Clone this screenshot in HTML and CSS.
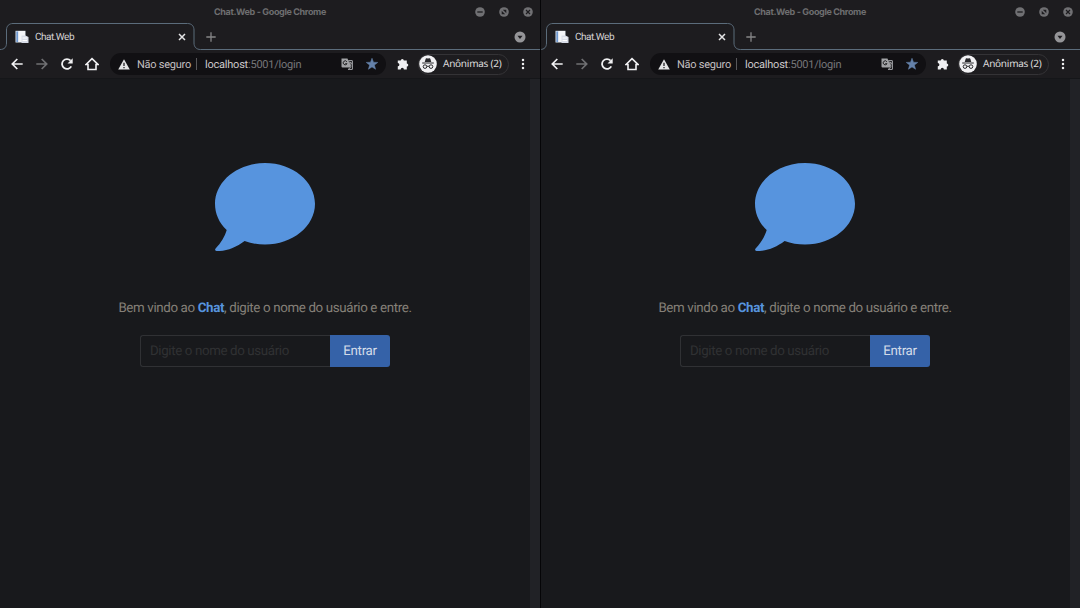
FILE: index.html
```html
<!DOCTYPE html>
<html lang="pt-BR">
<head>
<meta charset="utf-8">
<title>Chat.Web</title>
<link rel="stylesheet" href="styles.css">
</head>
<body>
<svg class="symbols" width="0" height="0" aria-hidden="true">
  <symbol id="win-min" viewBox="0 0 10 10"><circle cx="5" cy="5" r="4.800" fill="#707073"/><path d="M2.300 5h5.400" stroke="#1d1c1f" stroke-width="1.300"/></symbol>
  <symbol id="win-max" viewBox="0 0 10 10"><circle cx="5" cy="5" r="4.800" fill="#707073"/><path d="M3.800 2.700h3.500v3.500zM2.700 3.800v3.500h3.500z" fill="#1d1c1f"/></symbol>
  <symbol id="win-close" viewBox="0 0 10 10"><circle cx="5" cy="5" r="4.800" fill="#707073"/><path d="M3 3l4 4M7 3l-4 4" stroke="#1d1c1f" stroke-width="1.200"/></symbol>
  <symbol id="tab-line" viewBox="0 0 540 27"><path d="M0 26.500C4.500 26.500 6.500 24 6.500 20V7C6.500 3 9 .5 13 .5H187.500C191.500 .5 194 3 194 7V20C194 24 196.500 26.500 200.500 26.500H540" fill="none" stroke="#5b6c7b"/></symbol>
  <symbol id="favicon" viewBox="0 0 14 14"><path d="M.5.800h10v11.700H.5z" fill="#dfe6f1"/><path d="M1.300 1.500h1.700v10.500H1.300z" fill="#6e98cf"/><path d="M4 1h6v11H4z" fill="#f3f4f7"/><path d="M6.500 5.500h4l3 1.500v6h-7z" fill="#d9dde8"/><path d="M7.500 8h4.500M7.500 10.500h4.500" stroke="#fff"/></symbol>
  <symbol id="close" viewBox="0 0 8 8"><path d="M1 1l6 6M7 1L1 7" stroke="#e4e4e6" stroke-width="1.500"/></symbol>
  <symbol id="plus" viewBox="0 0 10 10"><path d="M5 .3v9.400M.3 5h9.400" stroke="#858587" stroke-width="1.300"/></symbol>
  <symbol id="chevron" viewBox="0 0 12 12"><circle cx="6" cy="6" r="5.500" fill="#959598"/><path d="M3.500 4.700h5L6 7.900z" fill="#1d1c1f"/></symbol>
  <symbol id="arrow" viewBox="0 0 12 12"><path d="M11.700 6H1.500M6.300 1L1.300 6l5 5" fill="none" stroke="currentColor" stroke-width="1.700"/></symbol>
  <symbol id="reload" viewBox="0 0 12 12"><path d="M10.300 8.300A4.900 4.900 0 1 1 9.600 2.700" fill="none" stroke="#f0f0f2" stroke-width="1.800"/><path d="M11.700 .3v5.200H6.500z" fill="#f0f0f2"/></symbol>
  <symbol id="home" viewBox="0 0 14 14"><path d="M1 7.500L7 1.600l6 5.900H11v5H3v-5z" fill="none" stroke="#f0f0f2" stroke-width="1.600"/></symbol>
  <symbol id="warning" viewBox="0 0 12 11"><path d="M6 .3L11.800 10.500H.2z" fill="#e4e4e5"/><path d="M6 3.700v3.200M6 7.900v1.400" stroke="#111013" stroke-width="1.200"/></symbol>
  <symbol id="translate" viewBox="0 0 12 12"><path d="M.5.500h6l3.500 9H1.500q-1 0-1-1z" fill="#a2a3a6"/><path d="M7.500 2.500H11q.5 0 .5.500v8q0 .5-.5.500H7l2.500-2z" fill="#29292c" stroke="#a2a3a6" stroke-width=".9"/><path d="M5.900 3.800A2 2 0 1 0 6 5.700H4.200" fill="none" stroke="#171619" stroke-width=".9"/><path d="M7.900 5h3M9.500 4v1M10.500 5Q10 7 8.500 8M8.300 6l2.500 2.500" fill="none" stroke="#b1b1b4" stroke-width=".7"/></symbol>
  <symbol id="star" viewBox="0 0 12 12"><path d="M6 .2l1.500 4 4.300.2-3.400 2.700 1.200 4.200L6 8.900l-3.600 2.400 1.200-4.200L.2 4.400l4.300-.2z" fill="#6582ab" stroke="#6582ab" stroke-width=".5"/></symbol>
  <symbol id="puzzle" viewBox="0 0 12 12"><path d="M.8 2.400h3a1.500 1.500 0 1 1 3 0h3v3a1.500 1.500 0 1 1 0 3v3H6.900a1.600 1.600 0 0 0-3.200 0H.8V8.300a1.600 1.600 0 0 0 0-3.200z" fill="#f0f0f2"/></symbol>
  <symbol id="incognito" viewBox="0 0 18 18"><circle cx="9" cy="9" r="8.800" fill="#f1f1f3"/><path d="M5.700 7l1-3.300q.2-.6.800-.4l1.500.3 1.500-.3q.6-.2.800.4l1 3.300zM3.200 7.500h11.600v1H3.200z" fill="#29292c"/><g fill="none" stroke="#29292c"><circle cx="6" cy="11.600" r="1.800"/><circle cx="12" cy="11.600" r="1.800"/><path d="M7.800 11.500q1.200-.8 2.400 0"/></g></symbol>
  <symbol id="dots" viewBox="0 0 4 12"><g fill="#eeeef0"><circle cx="2" cy="2" r="1.250"/><circle cx="2" cy="6" r="1.250"/><circle cx="2" cy="10" r="1.250"/></g></symbol>
  <symbol id="bubble" viewBox="0 0 100 88"><path d="M50 0C77.600 0 100 18.300 100 40.800S77.600 81.600 50 81.600C43 81.600 36 80.400 29.600 78C21 84.500 11 88.500 1.500 88Q-.8 87.400.6 85.500C6 80 10 73 11.700 67C4 60 0 50.500 0 40.800C0 18.300 22.400 0 50 0z" fill="#5794de"/></symbol>
</svg>
<div class="desktop">
  <section class="window">
    <header class="titlebar"><span class="title">Chat.Web - Google Chrome</span><div class="controls"><svg><use href="#win-min"/></svg><svg><use href="#win-max"/></svg><svg><use href="#win-close"/></svg></div></header>
    <div class="tabstrip"><svg class="tab-line"><use href="#tab-line"/></svg><svg class="favicon"><use href="#favicon"/></svg><span class="tab-name">Chat.Web</span><svg class="tab-close"><use href="#close"/></svg><svg class="new-tab"><use href="#plus"/></svg><svg class="chevron"><use href="#chevron"/></svg></div>
    <nav class="toolbar">
      <div class="nav-icons"><svg><use href="#arrow"/></svg><svg class="forward"><use href="#arrow"/></svg><svg><use href="#reload"/></svg><svg class="home"><use href="#home"/></svg></div>
      <div class="address"><svg class="warning"><use href="#warning"/></svg><span class="insecure">Não seguro</span><span class="divider"></span><span class="url"><b>localhost</b>:5001/login</span><svg class="translate"><use href="#translate"/></svg><svg class="star"><use href="#star"/></svg></div>
      <svg class="puzzle"><use href="#puzzle"/></svg>
      <div class="profile"><svg><use href="#incognito"/></svg><span>Anônimas (2)</span></div>
      <svg class="dots"><use href="#dots"/></svg>
    </nav>
    <div class="viewport">
      <main class="page"><svg class="bubble"><use href="#bubble"/></svg><p class="welcome">Bem vindo ao <strong>Chat</strong>, digite o nome do usuário e entre.</p><form class="login"><input class="username" type="text" placeholder="Digite o nome do usuário"><button class="enter" type="button">Entrar</button></form></main>
      <div class="scrollbar"></div>
    </div>
  </section>
  <section class="window window-right">
    <header class="titlebar"><span class="title">Chat.Web - Google Chrome</span><div class="controls"><svg><use href="#win-min"/></svg><svg><use href="#win-max"/></svg><svg><use href="#win-close"/></svg></div></header>
    <div class="tabstrip"><svg class="tab-line"><use href="#tab-line"/></svg><svg class="favicon"><use href="#favicon"/></svg><span class="tab-name">Chat.Web</span><svg class="tab-close"><use href="#close"/></svg><svg class="new-tab"><use href="#plus"/></svg><svg class="chevron"><use href="#chevron"/></svg></div>
    <nav class="toolbar">
      <div class="nav-icons"><svg><use href="#arrow"/></svg><svg class="forward"><use href="#arrow"/></svg><svg><use href="#reload"/></svg><svg class="home"><use href="#home"/></svg></div>
      <div class="address"><svg class="warning"><use href="#warning"/></svg><span class="insecure">Não seguro</span><span class="divider"></span><span class="url"><b>localhost</b>:5001/login</span><svg class="translate"><use href="#translate"/></svg><svg class="star"><use href="#star"/></svg></div>
      <svg class="puzzle"><use href="#puzzle"/></svg>
      <div class="profile"><svg><use href="#incognito"/></svg><span>Anônimas (2)</span></div>
      <svg class="dots"><use href="#dots"/></svg>
    </nav>
    <div class="viewport">
      <main class="page"><svg class="bubble"><use href="#bubble"/></svg><p class="welcome">Bem vindo ao <strong>Chat</strong>, digite o nome do usuário e entre.</p><form class="login"><input class="username" type="text" placeholder="Digite o nome do usuário"><button class="enter" type="button">Entrar</button></form></main>
      <div class="scrollbar"></div>
    </div>
  </section>
</div>
</body>
</html>
```
FILE: styles.css
```css
* { box-sizing: border-box; }
body { margin: 0; overflow: hidden; background: #18191c; font-family: Roboto, sans-serif; text-rendering: geometricPrecision; }
svg { display: block; flex: none; }
.symbols { position: absolute; }
.desktop { display: grid; grid-template-columns: 540px 540px; height: 608px; }
.window { position: relative; display: flex; flex-direction: column; background: #1d1c1f; }
.window-right::before { content: ""; position: absolute; z-index: 2; left: 0; top: 0; width: 1px; height: 100%; background: #050507; }
.titlebar { display: flex; align-items: center; height: 23px; padding: 1px 7px 0 214px; }
.title { width: 112px; padding-top: 2px; white-space: nowrap; font: 700 9px/14px Inter, sans-serif; letter-spacing: -0.35px; color: #6e6e70; }
.controls { display: flex; gap: 14px; margin-left: auto; }
.controls svg { width: 10px; height: 10px; }
.tabstrip { position: relative; display: flex; align-items: center; height: 27px; padding: 0 14px 0 15px; }
.tab-line { position: absolute; left: 0; top: 0; width: 540px; height: 27px; }
.favicon { width: 14px; height: 14px; }
.tab-name { width: 148.5px; padding: 2px 0 0 6px; font-size: 10px; line-height: 14px; letter-spacing: -0.5px; color: #d6d3d4; }
.tab-close { width: 8px; height: 8px; }
.new-tab { width: 10px; height: 10px; margin-left: 20.5px; }
.chevron { width: 12px; height: 12px; margin-left: auto; }
.toolbar { display: flex; align-items: center; height: 29px; padding-left: 11px; border-bottom: 1px solid #151619; }
.nav-icons { display: flex; align-items: center; gap: 13px; width: 99px; color: #f0f0f2; }
.nav-icons svg { width: 12px; height: 12px; }
.nav-icons .home { width: 14px; height: 14px; margin-left: -1px; }
.forward { color: #707073; transform: scaleX(-1); }
.address { display: flex; align-items: center; width: 276px; height: 22px; padding-left: 8px; border-radius: 11px; background: #111013; font-size: 11px; line-height: 16px; color: #c2bfc0; }
.warning { width: 12px; height: 11px; }
.insecure { width: 59px; margin-left: 7px; padding-top: 1px; white-space: nowrap; letter-spacing: -0.25px; }
.divider { width: 1px; height: 12px; background: #58575a; }
.url { width: 144px; padding: 1px 0 0 8px; letter-spacing: -0.22px; color: #77777a; }
.url b { font-weight: 400; color: #ccc9ca; }
.translate { width: 12px; height: 12px; }
.star { width: 12px; height: 12px; margin-left: 13px; }
.puzzle { width: 12px; height: 12px; margin-left: 11px; }
.profile { display: flex; align-items: center; width: 91px; height: 21px; margin-left: 9px; border: 1px solid #343336; border-radius: 11px; font: 10px/14px "Noto Sans", sans-serif; letter-spacing: -0.25px; color: #dedcdd; }
.profile svg { width: 18px; height: 18px; }
.profile span { padding: 0 0 2px 6px; white-space: nowrap; }
.dots { width: 4px; height: 12px; margin-left: 12px; }
.viewport { display: flex; flex: 1; }
.page { display: flex; flex: 1; flex-direction: column; align-items: center; padding-top: 84px; background: #18191c; }
.bubble { width: 100px; height: 88px; }
.welcome { margin: 48px 0 16px; font-size: 13.33px; line-height: 20px; letter-spacing: -0.36px; white-space: nowrap; color: #858078; }
.welcome strong { color: #5794de; }
.login { display: flex; width: 250px; height: 32px; margin: 0; }
.username { width: 190px; min-width: 0; padding: 0 9px; border: 1px solid #303134; border-right: 0; border-radius: 3px 0 0 3px; outline: 0; background: #18191c; font: 13.33px Roboto, sans-serif; letter-spacing: -0.38px; color: #858078; text-rendering: inherit; }
.username::placeholder { color: #303133; opacity: 1; }
.enter { width: 60px; padding: 0; border: 0; border-radius: 0 3px 3px 0; background: #3562a8; font: 13.33px Roboto, sans-serif; letter-spacing: -0.3px; color: #d2dbe8; text-rendering: inherit; }
.scrollbar { width: 10px; background: #212226; }
```
